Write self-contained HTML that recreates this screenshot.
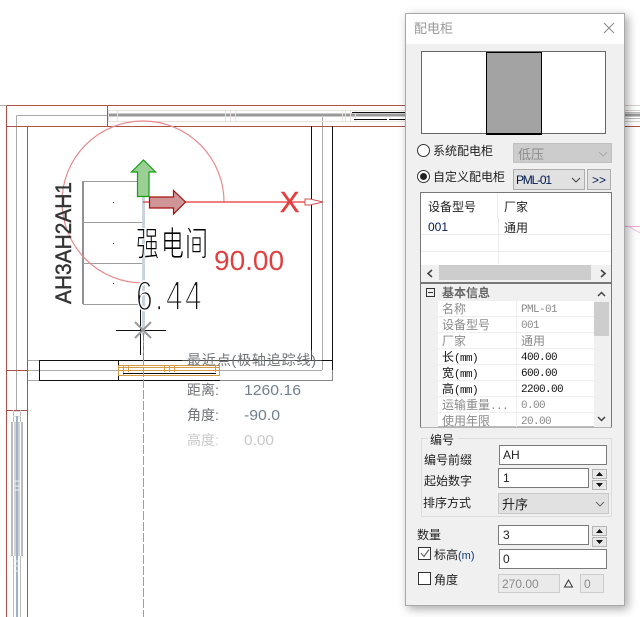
<!DOCTYPE html>
<html lang="zh"><head><meta charset="utf-8"><title>配电柜</title>
<style>
html,body{margin:0;padding:0;background:#fff;width:640px;height:617px;overflow:hidden}
svg{position:absolute;left:0;top:0;display:block}
#sh{position:absolute;left:405px;top:13px;width:220px;height:593px;box-shadow:3px 3px 9px rgba(0,0,0,.35)}
text{font-family:"Liberation Sans","Noto Sans CJK SC",sans-serif;font-size:12px;fill:#222}
.z{font-family:"WenQuanYi Zen Hei","Noto Sans CJK SC",sans-serif;font-size:12px}
.m{font-family:"Liberation Mono","WenQuanYi Zen Hei",monospace;font-size:11px;letter-spacing:-.6px}
.g{fill:#8a8a8a}
.t{font-size:14px;fill:#6f7478}
</style></head><body>
<svg width="640" height="617" viewBox="0 0 640 617" fill="none" shape-rendering="crispEdges">
<!-- CAD -->
<g stroke="#aaa">
<path d="M0 105.500H6M16.500 115.500V410M16.500 115.500H107M27 360.500H39M27 370.500H39M27 380.500H39M322.500 117V370M39 370.500H322"/>
</g>
<path d="M107 115H405" stroke="#999" stroke-width="3"/>
<g stroke="#eadfdf">
<path d="M107 110.500H405M107 121.500H405M108.500 110V122M117.500 110V122M225.500 110V122M230.500 110V122M235.500 110V122M342.500 110V122M345.500 110V122M350.500 110V122M355.500 110V122"/>
</g>
<g stroke="#111">
<path d="M352 112.500H405"/>
<path d="M354 119.500H387M389 119.500H405"/>
</g>
<g stroke="#ac5048" stroke-width="1">
<path d="M6.500 105.500H405M6.500 105.500V617M27.500 126.500V617M6.500 126.500H405M107.500 105.500V126.500M6.500 370.500H27.500M6.500 410.500H27.500"/>
</g>
<!-- lower-left window -->
<rect x="11" y="422" width="2" height="134" fill="#bcbcbc"/>
<rect x="21" y="422" width="2" height="134" fill="#bcbcbc"/>
<rect x="14" y="422" width="6" height="134" fill="#d2d2d2"/>
<g stroke="#bbb"><path d="M13.500 410V422M20.500 410V422M13.500 556V617M20.500 556V617"/></g>
<path d="M13 411.500H21M13 416.500H21" stroke="#ddd"/>
<path d="M17 416V617" stroke="#9cb2c9" stroke-width="2"/>
<path d="M14 481H20M14 486H20M14 490H20M14 561H20M14 566H20M14 571H20" stroke="#eef0f4"/>
<!-- cabinet -->
<g stroke="#9c9c9c">
<path d="M83 181V304" stroke-width="2" stroke="#919191"/>
<path d="M83 181.500H143M83 222.500H143M83 263.500H143M83 304.500H143"/>
</g>
<path d="M143.500 197V335" stroke="#c8d3dc" stroke-width="3"/>
<rect x="113" y="202" width="1" height="1" fill="#333"/><rect x="113" y="243" width="1" height="1" fill="#333"/><rect x="113" y="283" width="1" height="1" fill="#333"/>
<!-- walls -->
<g stroke="#111">
<path d="M311.500 126V360M332.500 126V370"/>
<rect x="39.500" y="360.500" width="79" height="20"/>
<path d="M118 360.500H332M118 380.500H220"/>
</g>
<path d="M220 380.500H332.500V370" stroke="#888"/>
<!-- window -->
<rect x="182" y="350" width="140" height="20" fill="#fff" fill-opacity=".25"/>
<g stroke="#d79a45">
<rect x="118.500" y="365.500" width="101" height="10"/>
<path d="M118 367.500H220M118 370.500H220M123.500 366V375M128.500 366V372M164.500 366V372M169.500 366V372M174.500 366V372M215.500 366V372"/>
</g>
<path d="M123 373.500H216" stroke="#111"/>
<!-- crosshair -->
<path d="M116 330.500H166M140.500 300V355" stroke="#111"/>
<g shape-rendering="auto">
<path d="M135 322L151 338M151 322L135 338" stroke="#999" stroke-width="2"/>
<path d="M143.500 335V617" stroke="#6bace8" stroke-dasharray="9 2"/>
<path d="M143.500 333V360" stroke="#c55" stroke-dasharray="7 3" stroke-width=".8"/>
<path d="M224 202A81 81 0 1 0 143 283" stroke="#e88a8d" stroke-width="1.200"/>
<path d="M143 202H322" stroke="#e63535" stroke-width="1.200"/>
<path d="M143.500 160L155.500 172H149V196.500H137.500V172H131.500Z" fill="#9ccf96" stroke="#12a012" stroke-width="1.200"/>
<path d="M149.500 197H173.500V190.500L185.500 202L173.500 214V208H149.500Z" fill="#cf9597" stroke="#a81010" stroke-width="1.200"/>
<path d="M305 199H310L323 202L310 205H305Z" fill="#fff" stroke="#d05050" stroke-width="1"/>
<text x="280" y="212" style="font-size:29px;fill:#e04040;stroke:#e04040;stroke-width:.5px">X</text>
<text x="214" y="270" style="font-size:28px;fill:#e04040">90.00</text>
<text transform="translate(71,304) rotate(-90)" textLength="122" lengthAdjust="spacingAndGlyphs" style="font-size:22px;fill:#333;stroke:#333;stroke-width:.4px">AH3AH2AH1</text>
<g transform="translate(136,256) scale(1,1.5)"><text x="0 25 49" y="0" style="font-size:23px;fill:#000;stroke:#fff;stroke-width:.6px">强电间</text></g>
<g transform="translate(0,310) scale(1,1.4)"><text x="136 155 166 185" y="0" style="font-size:30px;fill:#111;stroke:#fff;stroke-width:1.200px">6.44</text></g>
<text class="t" x="187" y="365" textLength="129">最近点(极轴追踪线)</text>
<text class="t" x="187" y="395">距离:</text><text class="t" x="244" y="395" textLength="57" lengthAdjust="spacingAndGlyphs" style="font-size:15px;fill:#6f7f90">1260.16</text>
<text class="t" x="187" y="420">角度:</text><text class="t" x="244" y="420" textLength="36" lengthAdjust="spacingAndGlyphs" style="font-size:15px;fill:#6f7f90">-90.0</text>
<text class="t" x="187" y="445" style="fill:#c9c9c9">高度:</text><text class="t" x="244" y="445" textLength="30" lengthAdjust="spacingAndGlyphs" style="font-size:15px;fill:#c9c9c9">0.00</text>
</g>
<!-- right of panel -->
<path d="M625 105.500H640M625 110.500H640M625 121.500H640" stroke="#d8cfcf"/>
<path d="M625 115H640" stroke="#999" stroke-width="3"/>
<path d="M625 112.500H640M625 118.500H640" stroke="#bbb"/>
<path d="M625 126.500H640" stroke="#ac5048"/>
<path d="M625 226.500H640" stroke="#f3a8dd"/>
<path d="M628 226L640 233" stroke="#f5bfe4" shape-rendering="auto"/>
</svg>
<div id="sh"></div>
<svg width="640" height="617" viewBox="0 0 640 617" fill="none" shape-rendering="crispEdges">
<!-- panel -->
<rect x="405.500" y="13.500" width="219" height="592" fill="#f0f0f0" stroke="#a9a9a9"/>
<rect x="406" y="14" width="218" height="30" fill="#fff"/>
<text x="414" y="33" style="font-size:13px;fill:#999">配电柜</text>
<path d="M604 23L614 33M614 23L604 33" stroke="#888" shape-rendering="auto"/>
<!-- preview -->
<rect x="421.500" y="51.500" width="184" height="82" fill="#fff" stroke="#666"/>
<rect x="486.500" y="52.500" width="55" height="81" fill="#a3a3a3" stroke="#000"/>
<path d="M486 134.500H542" stroke="#000"/>
<!-- radios -->
<g shape-rendering="auto">
<circle cx="423.500" cy="150.500" r="6" fill="#fff" stroke="#333"/>
<circle cx="423.500" cy="176.500" r="6" fill="#fff" stroke="#333"/>
<circle cx="423.500" cy="176.500" r="3.500" fill="#222"/>
</g>
<text x="433" y="155">系统配电柜</text>
<text x="433" y="181">自定义配电柜</text>
<rect x="513.500" y="143.500" width="98" height="19" fill="#ccc" stroke="#c0c0c0"/>
<text x="518" y="159" style="font-size:13px;fill:#8a8a8a">低压</text>
<path d="M599 152L603 156L607 152" stroke="#aaa" shape-rendering="auto"/>
<rect x="513.500" y="169.500" width="71" height="20" fill="#e1e1e1" stroke="#adadad"/>
<text x="516" y="184" style="fill:#001a50" textLength="36">PML-01</text>
<path d="M572 178L576 182L580 178" stroke="#444" shape-rendering="auto"/>
<rect x="587.500" y="169.500" width="23" height="20" fill="#e1e1e1" stroke="#adadad"/>
<text x="592" y="184" style="fill:#001a50" textLength="14">&gt;&gt;</text>
<!-- list -->
<rect x="420.500" y="192.500" width="191" height="90" fill="#fff" stroke="#777"/>
<path d="M497.500 194V218M498.500 218V264M421 234.500H611M421 251.500H611" stroke="#ececec"/>
<text x="428" y="211">设备型号</text><text x="504" y="211">厂家</text>
<text x="428" y="231" style="fill:#001a50">001</text><text x="504" y="232">通用</text>
<rect x="421" y="265" width="190" height="17" fill="#f0f0f0"/>
<rect x="439" y="265" width="152" height="15" fill="#cdcdcd"/>
<path d="M432 270L428 273.500L432 277M601 270L605 273.500L601 277" stroke="#444" stroke-width="1.600" shape-rendering="auto"/>
<!-- grid -->
<rect x="420.500" y="283.500" width="191" height="143.500" fill="#fff" stroke="#777"/>
<rect x="421" y="284" width="17" height="143" fill="#f0f0f0"/>
<rect x="421" y="284" width="173" height="17" fill="#f0f0f0"/>
<rect x="594" y="284" width="17" height="143" fill="#f0f0f0"/>
<rect x="594" y="302" width="15" height="34" fill="#cdcdcd"/>
<path d="M438 316.500H594M438 332.500H594M438 348.500H594M438 364.500H594M438 380.500H594M438 396.500H594M438 412.500H594M516.500 301V427" stroke="#efefef"/>
<rect x="426.500" y="288.500" width="8" height="8" stroke="#333"/>
<path d="M428 292.500H433" stroke="#333"/>
<path d="M598 296L601.500 292.500L605 296M598 417L601.500 420.500L605 417" stroke="#444" stroke-width="1.500" shape-rendering="auto"/>
<text x="442" y="297" style="font-size:12px;font-weight:700;fill:#666">基本信息</text>
<text class="z g" x="442" y="313">名称</text><text class="m g" x="521" y="312">PML-01</text>
<text class="z g" x="442" y="329">设备型号</text><text class="m g" x="521" y="328">001</text>
<text class="z g" x="442" y="345">厂家</text><text class="z g" x="521" y="345">通用</text>
<text class="z" x="442" y="361" style="fill:#111">长<tspan class="m" style="fill:#111">(mm)</tspan></text><text class="m" x="521" y="360" style="fill:#111">400.00</text>
<text class="z" x="442" y="377" style="fill:#111">宽<tspan class="m" style="fill:#111">(mm)</tspan></text><text class="m" x="521" y="376" style="fill:#111">600.00</text>
<text class="z" x="442" y="393" style="fill:#111">高<tspan class="m" style="fill:#111">(mm)</tspan></text><text class="m" x="521" y="392" style="fill:#111">2200.00</text>
<text class="z g" x="442" y="409">运输重量<tspan class="m g">...</tspan></text><text class="m g" x="521" y="408">0.00</text>
<text class="z g" x="442" y="425">使用年限</text><text class="m g" x="521" y="424">20.00</text>
<!-- group -->
<rect x="421.500" y="438.500" width="190" height="78" stroke="#dcdcdc"/>
<rect x="428" y="434" width="30" height="10" fill="#f0f0f0"/>
<text x="430" y="444">编号</text>
<text x="424" y="464">编号前缀</text>
<rect x="499.500" y="445.500" width="107" height="19" fill="#fff" stroke="#7a7a7a"/>
<text x="503" y="459">AH</text>
<text x="424" y="485">起始数字</text>
<rect x="498.500" y="468.500" width="90" height="19" fill="#fff" stroke="#7a7a7a"/>
<text x="503" y="482">1</text>
<text x="423" y="507">排序方式</text>
<rect x="498.500" y="493.500" width="110" height="20" fill="#e1e1e1" stroke="#c8c8c8"/>
<text x="502" y="509" style="font-size:13px">升序</text>
<path d="M596 502L600 506L604 502" stroke="#666" shape-rendering="auto"/>
<!-- spinners -->
<g>
<rect x="592.500" y="469.500" width="14" height="9" fill="#e8e8e8" stroke="#b5b5b5"/><rect x="592.500" y="480.500" width="14" height="9" fill="#e8e8e8" stroke="#b5b5b5"/>
<rect x="592.500" y="526.500" width="14" height="9" fill="#e8e8e8" stroke="#b5b5b5"/><rect x="592.500" y="537.500" width="14" height="9" fill="#e8e8e8" stroke="#b5b5b5"/>
</g>
<g fill="#111" shape-rendering="auto">
<path d="M599.500 472L603 476H596ZM599.500 487L603 483H596ZM599.500 529L603 533H596ZM599.500 544L603 540H596Z"/>
</g>
<text x="417" y="539">数量</text>
<rect x="498.500" y="525.500" width="90" height="19" fill="#fff" stroke="#7a7a7a"/>
<text x="503" y="539">3</text>
<rect x="418.500" y="547.500" width="12" height="12" fill="#fff" stroke="#333"/>
<path d="M421 553L424 556.500L429 549.500" stroke="#666" stroke-width="1.200" shape-rendering="auto"/>
<text x="434" y="559">标高</text><text x="458" y="559" style="font-size:11px;fill:#0a3a7a">(m)</text>
<rect x="499.500" y="549.500" width="107" height="19" fill="#fff" stroke="#7a7a7a"/>
<text x="503" y="563">0</text>
<rect x="418.500" y="572.500" width="12" height="12" fill="#fff" stroke="#333"/>
<text x="434" y="584">角度</text>
<rect x="498.500" y="574.500" width="61" height="18" fill="#eaeaea" stroke="#ccc"/>
<text x="502" y="588" style="fill:#8a8a8a">270.00</text>
<path d="M564.500 587H572.500L568.500 580Z" stroke="#333" shape-rendering="auto"/>
<rect x="580.500" y="574.500" width="23" height="18" fill="#eaeaea" stroke="#ccc"/>
<text x="584" y="588" style="fill:#8a8a8a">0</text>
</svg>
</body></html>
